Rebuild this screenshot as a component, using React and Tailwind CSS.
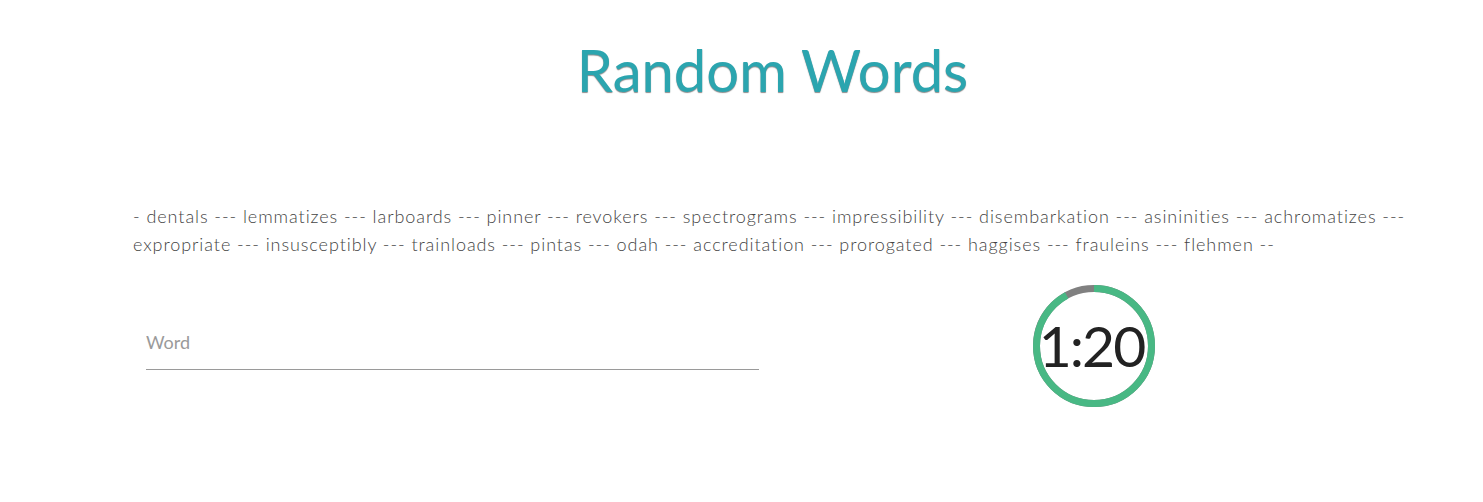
import React from 'react';

const words = [
    'dentals', 'lemmatizes', 'larboards', 'pinner', 'revokers', 'spectrograms', 'impressibility',
    'disembarkation', 'asininities', 'achromatizes', 'expropriate', 'insusceptibly', 'trainloads',
    'pintas', 'odah', 'accreditation', 'prorogated', 'haggises', 'frauleins', 'flehmen'
];

const Timer = ({ left = 80, total = 87 }) => {
    const r = 57.5;
    const c = 2 * Math.PI * r;
    const done = (left / total) * c;
    return (
        <div className="relative w-[122px] h-[122px]">
            <svg width="122" height="122" viewBox="0 0 122 122">
                <circle cx="61" cy="61" r={r} fill="none" stroke="#808080" strokeWidth="7" />
                <circle
                    cx="61" cy="61" r={r} fill="none" stroke="#48b884" strokeWidth="7"
                    strokeDasharray={`${done} ${c}`}
                    transform="rotate(-90 61 61)"
                />
            </svg>
            <div className="absolute inset-0 flex items-center justify-center pb-[2px] pr-[5px] text-[57px] leading-none text-[#222] tracking-[-2px]">
                1:20
            </div>
        </div>
    );
};

export default function App() {
    return (
        <div className="min-h-screen bg-white font-['Lato',sans-serif]">
            {/* Title */}
            <h1 className="pt-[41px] pl-[62px] text-center text-[58px] leading-none text-[#2ba5af] [text-shadow:0_1px_1px_rgba(0,0,0,0.45)]">
                Random Words
            </h1>

            {/* Word list */}
            <p className="mt-[103px] pl-[133px] pr-[40px] text-[18px] leading-[28px] tracking-[0.93px] text-[#444] font-light">
                <span className="whitespace-nowrap">- {words.slice(0, 10).join(' --- ')} ---</span>
                <br />
                <span className="whitespace-nowrap">{words.slice(10).join(' --- ')} --</span>
            </p>

            {/* Input + timer */}
            <div className="mt-[27px] flex items-start">
                <div className="ml-[146px] mt-[44px] w-[613px]">
                    <input
                        type="text"
                        placeholder="Word"
                        className="w-full h-[41px] border-b border-[#9a9a9a] pb-[14px] text-[18px] text-[#444] outline-none placeholder:text-[#9a9a9a]"
                    />
                </div>
                <div className="ml-[274px]">
                    <Timer />
                </div>
            </div>
        </div>
    );
}
